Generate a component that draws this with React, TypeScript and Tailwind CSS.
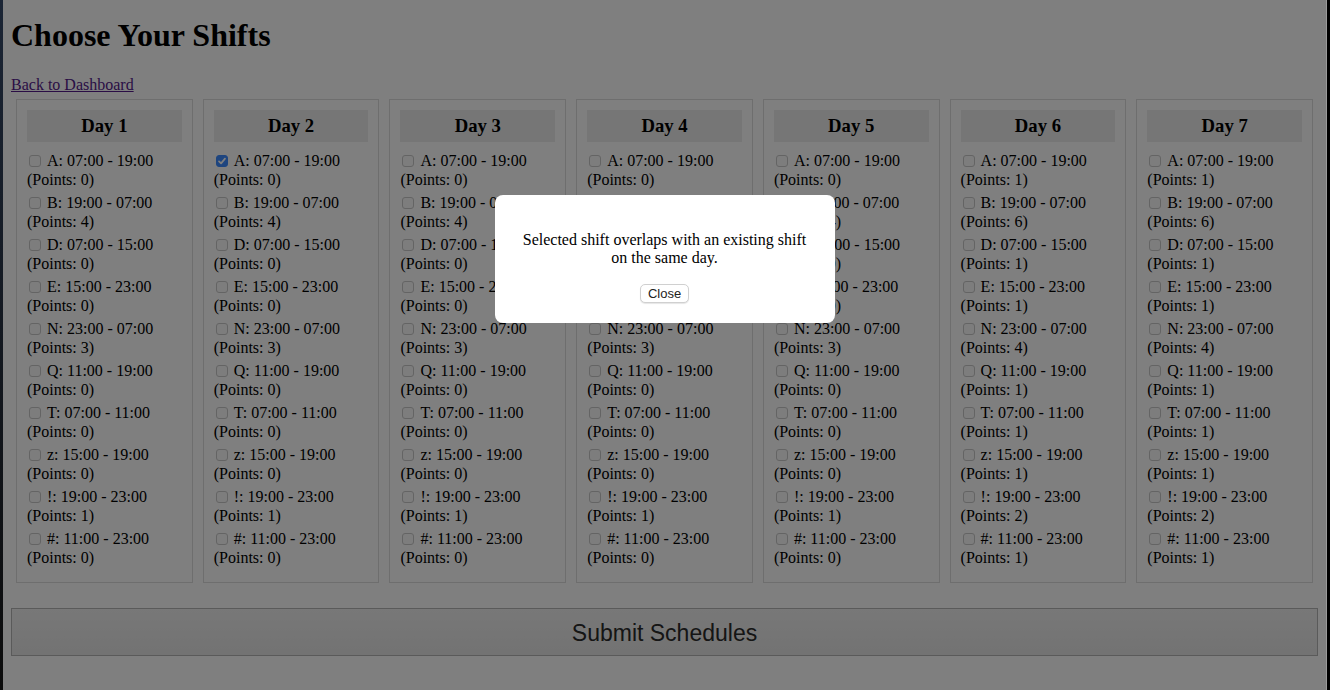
import React from "react";

const shifts = [
  { code: "A", time: "07:00 - 19:00" },
  { code: "B", time: "19:00 - 07:00" },
  { code: "D", time: "07:00 - 15:00" },
  { code: "E", time: "15:00 - 23:00" },
  { code: "N", time: "23:00 - 07:00" },
  { code: "Q", time: "11:00 - 19:00" },
  { code: "T", time: "07:00 - 11:00" },
  { code: "z", time: "15:00 - 19:00" },
  { code: "!", time: "19:00 - 23:00" },
  { code: "#", time: "11:00 - 23:00" },
];

const weekday = [0, 4, 0, 0, 3, 0, 0, 0, 1, 0];
const weekend = [1, 6, 1, 1, 4, 1, 1, 1, 2, 1];

const days = [weekday, weekday, weekday, weekday, weekday, weekend, weekend];

function Check({ checked }: { checked: boolean }) {
  return (
    <span className="relative inline-block align-middle ml-[2px] mr-[6px] w-[12px] h-[12px] -mt-[2px]">
      <input
        type="checkbox"
        defaultChecked={checked}
        className={
          checked
            ? "appearance-none block w-[12px] h-[12px] rounded-[3px] bg-[#3d8bff] border border-[#3d8bff] m-0"
            : "appearance-none block w-[12px] h-[12px] rounded-[3px] bg-[#fafafa] border border-[#c9c9c9] m-0"
        }
      />
      {checked && (
        <svg
          viewBox="0 0 12 12"
          className="absolute inset-0 w-[12px] h-[12px] pointer-events-none"
        >
          <path
            d="M3 6.3 L5.1 8.4 L9 3.6"
            fill="none"
            stroke="white"
            strokeWidth="1.7"
            strokeLinecap="round"
            strokeLinejoin="round"
          />
        </svg>
      )}
    </span>
  );
}

export default function App() {
  return (
    <div className="flex h-[690px] w-[1330px] overflow-hidden font-['Liberation_Serif',serif] text-black">
      <div className="w-[3px] bg-gradient-to-b from-[#1b2535] to-[#0c0c0c]" />
      <div className="relative flex-1 bg-white overflow-hidden">
        <div className="px-[8px]">
          <h1 className="pt-[17px] text-[32px] leading-[37px] font-bold mb-[22px]">
            Choose Your Shifts
          </h1>
          <div className="leading-[18px] text-[16px]">
            <a href="#" className="text-[#551a8b] underline">
              Back to Dashboard
            </a>
          </div>
          <div className="flex">
            {days.map((pts, d) => (
              <div
                key={d}
                className="flex-1 m-[5px] border border-[#dddddd] p-[10px]"
              >
                <h3 className="bg-[#ececec] py-[5px] text-center text-[18.72px] leading-[22px] font-bold mb-[10px]">
                  Day {d + 1}
                </h3>
                {shifts.map((s, i) => (
                  <div key={s.code} className="mb-[5px] text-[16px] leading-[18.5px]">
                    <label>
                      <Check checked={d === 1 && i === 0} />
                      {s.code}: {s.time} (Points: {pts[i]})
                    </label>
                  </div>
                ))}
              </div>
            ))}
          </div>
          <button className="mt-[20px] w-full h-[48px] border border-[#b4b4b4] bg-gradient-to-b from-[#f0f0f0] to-[#e6e6e6] font-['Liberation_Sans',Arial,sans-serif] text-[23px] leading-[26px] pt-[2px] text-[#2a2a2a]">
            Submit Schedules
          </button>
        </div>

        <div className="absolute inset-0 bg-black/50 flex justify-center items-start">
          <div className="mt-[195px] w-[340px] bg-white rounded-[8px] p-[20px] text-center">
            <p className="my-[16px] text-[16px] leading-[18.4px]">
              Selected shift overlaps with an existing shift on the same day.
            </p>
            <button className="block mx-auto font-['Liberation_Sans',Arial,sans-serif] text-[13px] leading-[15px] px-[7px] py-[1px] border border-[#d0d0d0] rounded-[5px] bg-white text-[#222] shadow-[0_1px_1px_rgba(0,0,0,0.1)]">
              Close
            </button>
          </div>
        </div>
      </div>
      <div className="w-[1px] bg-[#9a9a9a]" />
      <div className="w-[3px] bg-black" />
    </div>
  );
}
